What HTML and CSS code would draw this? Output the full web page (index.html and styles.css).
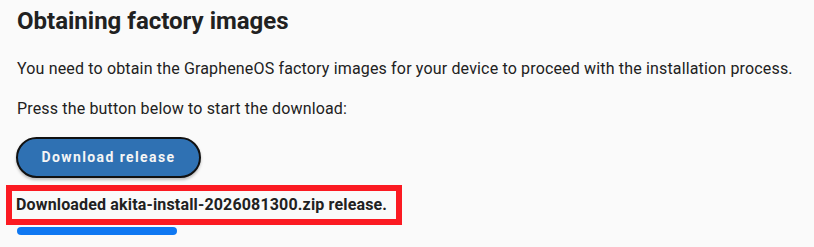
FILE: index.html
```html
<!doctype html>
<html>
<head>
<meta charset="utf-8">
<title>GrapheneOS web installer</title>
<link rel="stylesheet" href="styles.css">
</head>
<body>
    <div class="section">
        <h2>Obtaining factory images</h2>
        <p>You need to obtain the GrapheneOS factory images for your device to proceed with the installation process.</p>
        <p>Press the button below to start the download:</p>
        <button class="btn">Download release</button>
        <div class="status">Downloaded akita-install-2026081300.zip release.</div>
        <div class="progress"></div>
    </div>
</body>
</html>
```

FILE: styles.css
```css
* {margin: 0; padding: 0; box-sizing: border-box;}
body {
    background: #fafafa;
    color: #212121;
    font-family: Roboto, "Liberation Sans", sans-serif;
    font-size: 16px;
    line-height: 24px;
    letter-spacing: 0.16px;
}
.section {
    padding: 7px 17px 0 17px;
}
h2 {
    font-size: 24px;
    line-height: 28.8px;
    font-weight: 700;
    letter-spacing: 0;
    margin-bottom: 21px;
}
p {
    margin-bottom: 16px;
}
.btn {
    display: block;
    height: 41px;
    width: 185px;
    margin-left: -1px;
    border: 2px solid #111;
    border-radius: 21px;
    background: #2f71b3;
    color: #f5f5f5;
    font-family: Roboto, "Liberation Sans", sans-serif;
    font-size: 14px;
    font-weight: 700;
    letter-spacing: 1.4px;
    box-shadow: 0 2px 3px rgba(0, 0, 0, 0.25);
}
.status {
    display: inline-block;
    margin: 7px 0 0 -11px;
    width: 396px;
    height: 40px;
    border: 6px solid #fb1a22;
    padding: 2px 4px;
    font-weight: 700;
}
.progress {
    width: 160px;
    height: 8px;
    margin-top: 2px;
    border-radius: 4px;
    background: #0f78f2;
}
```
